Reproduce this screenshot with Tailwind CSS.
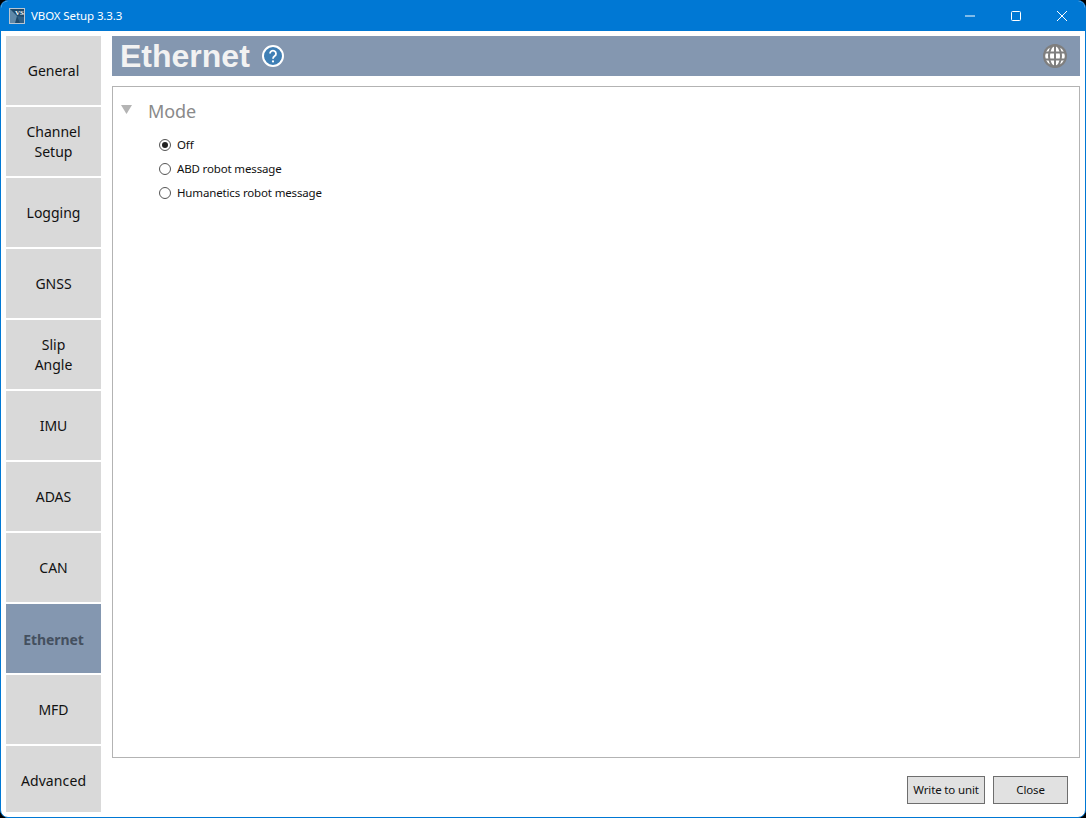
<!DOCTYPE html>
<html lang="en">
<head>
  <meta charset="UTF-8">
  <title>VBOX Setup 3.3.3</title>
  <script src="https://cdn.jsdelivr.net/npm/@tailwindcss/browser@4"></script>
</head>
<body class="bg-black font-['Noto_Sans',sans-serif]">
  <div class="w-[1086px] h-[818px] bg-white rounded-[8px] overflow-hidden border border-[#0078d4] flex flex-col">

    <!-- title bar -->
    <div class="h-[30px] bg-[#0078d4] flex items-center shrink-0 text-white">
      <svg class="ml-[8px] w-[16px] h-[16px]" viewBox="0 0 16 16">
        <rect x="0.5" y="0.5" width="15" height="15" fill="#1f4a6b" stroke="#b9c6d2"/>
        <path d="M1 1 L8 8 L6 15 L1 15 Z" fill="#5f88a8"/>
        <path d="M15 9 L8 8 L11 15 L15 15 Z" fill="#2f5f85"/>
        <text x="15" y="7" text-anchor="end" font-size="7" font-weight="700" fill="#fff" font-family="Liberation Serif, serif">VS</text>
      </svg>
      <span class="ml-[6px] text-[11.5px] tracking-[-0.1px]">VBOX Setup 3.3.3</span>
      <div class="ml-auto flex items-center h-full">
        <svg class="w-[46px] h-[30px]" viewBox="0 0 46 30"><path d="M18 15h10" stroke="#fff" stroke-width="1"/></svg>
        <svg class="w-[46px] h-[30px]" viewBox="0 0 46 30"><rect x="18.5" y="10.5" width="9" height="9" rx="1" fill="none" stroke="#fff"/></svg>
        <svg class="w-[46px] h-[30px]" viewBox="0 0 46 30"><path d="M18 10l10 10M28 10l-10 10" stroke="#fff" stroke-width="1"/></svg>
      </div>
    </div>

    <div class="flex-1 flex p-[5px] gap-[11px] min-h-0">
      <!-- side nav -->
      <nav class="w-[95px] shrink-0 flex flex-col gap-[2px] text-[14px] leading-[20px] text-[#111] text-center">
        <div class="h-[69px] bg-[#d9d9d9] flex items-center justify-center">General</div>
        <div class="h-[69px] bg-[#d9d9d9] flex items-center justify-center">Channel<br>Setup</div>
        <div class="h-[69px] bg-[#d9d9d9] flex items-center justify-center">Logging</div>
        <div class="h-[69px] bg-[#d9d9d9] flex items-center justify-center">GNSS</div>
        <div class="h-[69px] bg-[#d9d9d9] flex items-center justify-center">Slip<br>Angle</div>
        <div class="h-[69px] bg-[#d9d9d9] flex items-center justify-center">IMU</div>
        <div class="h-[69px] bg-[#d9d9d9] flex items-center justify-center">ADAS</div>
        <div class="h-[69px] bg-[#d9d9d9] flex items-center justify-center">CAN</div>
        <div class="h-[69px] bg-[#8497b0] flex items-center justify-center pt-[2px] font-bold text-[#44505f] tracking-[-0.1px]">Ethernet</div>
        <div class="h-[69px] bg-[#d9d9d9] flex items-center justify-center">MFD</div>
        <div class="h-[66px] bg-[#d9d9d9] flex items-center justify-center pt-[4px] tracking-[0.1px]">Advanced</div>
      </nav>

      <main class="flex-1 flex flex-col min-w-0">
        <!-- header -->
        <div class="h-[40px] bg-[#8497b0] flex items-center pl-[8px] pr-[13px] shrink-0">
          <h1 class="text-[32px] leading-[40px] font-bold text-[#f2f2f2] font-['Liberation_Sans',sans-serif]">Ethernet</h1>
          <svg class="ml-[11px] w-[24px] h-[24px]" viewBox="0 0 24 24">
            <circle cx="12" cy="12" r="10" fill="#3f7fb5" stroke="#fff" stroke-width="2"/>
            <path d="M9 9.6a3 3 0 1 1 4.7 2.5c-1.1.8-1.7 1.3-1.7 2.6" fill="none" stroke="#fff" stroke-width="1.8"/>
            <circle cx="12" cy="17.4" r="1.1" fill="#fff"/>
          </svg>
          <svg class="ml-auto w-[24px] h-[24px]" viewBox="0 0 24 24">
            <circle cx="12" cy="12" r="12" fill="#7f7f7f"/>
            <circle cx="12" cy="12" r="9.8" fill="#fff"/>
            <path d="M1 8.5h22M1 15.5h22" stroke="#7f7f7f" stroke-width="2"/>
            <path d="M12 1v22" stroke="#7f7f7f" stroke-width="2"/>
            <ellipse cx="12" cy="12" rx="6" ry="11" fill="none" stroke="#7f7f7f" stroke-width="2"/>
          </svg>
        </div>

        <!-- panel -->
        <section class="mt-[10px] h-[672px] border border-[#b3b3b3] shrink-0 pl-[8px] pt-[10px]">
          <div class="flex items-center h-[28px]">
            <svg class="w-[11px] h-[9px] mb-[3px]" viewBox="0 0 11 9"><path d="M0 0h11L5.5 9z" fill="#b4b4b4"/></svg>
            <span class="ml-[16px] text-[18px] tracking-[-0.1px] text-[#8a8a8a]">Mode</span>
          </div>
          <div class="mt-[10px] ml-[38px] flex flex-col gap-[4px] text-[11.5px] tracking-[-0.15px] leading-[20px] text-[#111]">
            <label class="flex items-center gap-[6px]">
              <span class="w-[12px] h-[12px] rounded-full border border-[#555] flex items-center justify-center"><span class="w-[6px] h-[6px] rounded-full bg-[#222]"></span></span>
              Off
            </label>
            <label class="flex items-center gap-[6px]">
              <span class="w-[12px] h-[12px] rounded-full border border-[#555]"></span>
              ABD robot message
            </label>
            <label class="flex items-center gap-[6px]">
              <span class="w-[12px] h-[12px] rounded-full border border-[#555]"></span>
              Humanetics robot message
            </label>
          </div>
        </section>

        <!-- footer buttons -->
        <div class="mt-[18px] flex justify-end gap-[8px] pr-[12px] text-[11.5px] tracking-[-0.15px] text-[#111]">
          <button class="w-[78px] h-[28px] bg-[#e1e1e1] border border-[#6e6e6e]">Write to unit</button>
          <button class="w-[75px] h-[28px] bg-[#e1e1e1] border border-[#6e6e6e]">Close</button>
        </div>
      </main>
    </div>
  </div>
</body>
</html>
